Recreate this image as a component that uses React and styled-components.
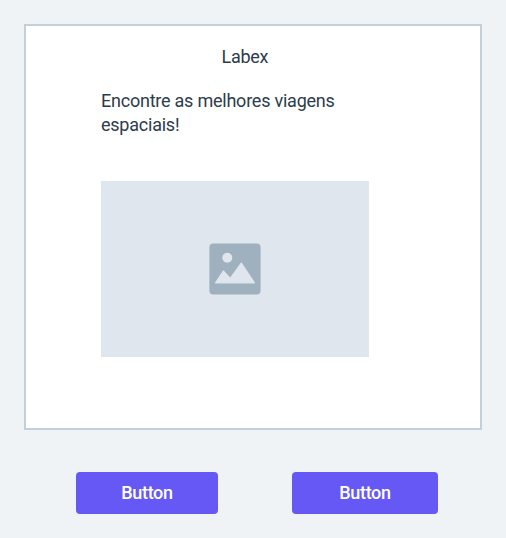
import React from "react";
import styled, { createGlobalStyle } from "styled-components";

const GlobalStyle = createGlobalStyle`
  * { box-sizing: border-box; }
  body { margin: 0; background: #eff3f6; }
`;
const Page = styled.main`
  width: 506px;
  height: 538px;
  padding: 24px 24px 0;
  background: #eff3f6;
  color: #2c3c4b;
  font: 18px/24px "DIN", Roboto, sans-serif;
`;
const Card = styled.section`
  height: 406px;
  padding: 19px 75px 0;
  border: 2px solid #c3cfd9;
  background: #fff;
`;
const Title = styled.h1`
  margin: 0 0 20px 120.5px;
  font: inherit;
  letter-spacing: -0.3px;
`;
const Intro = styled.p`
  width: 260px;
  margin: 0;
  letter-spacing: -0.23px;
`;
const Placeholder = styled.div`
  display: grid;
  place-items: center;
  width: 268px;
  height: 176px;
  margin-top: 44px;
  background: #dfe6ed;
`;
const Actions = styled.div`
  display: flex;
  gap: 74px;
  margin: 42px 0 0 52px;
`;
const Button = styled.button`
  width: ${({ $width }) => $width}px;
  height: 42px;
  padding: 0;
  border: 0;
  border-radius: 4px;
  background: #6558f5;
  color: #fff;
  font: 500 18px/42px "DIN", Roboto, sans-serif;
  letter-spacing: -0.35px;
`;

function ImageIcon() {
  return (
    <svg width="52" height="52" viewBox="0 0 52 52">
      <rect x=".4" y=".4" width="51.2" height="51.2" rx="4" fill="#9fb0be" />
      <circle cx="18.3" cy="14.7" r="5" fill="#dfe6ed" />
      <path
        d="M6.6 39.8 14.3 28 21.3 35.3 32.3 20 45.4 39.8Z"
        fill="#dfe6ed"
        stroke="#dfe6ed"
        strokeWidth="1.2"
        strokeLinejoin="round"
      />
    </svg>
  );
}

export default function App() {
  return (
    <Page>
      <GlobalStyle />
      <Card>
        <Title>Labex</Title>
        <Intro>Encontre as melhores viagens espaciais!</Intro>
        <Placeholder><ImageIcon /></Placeholder>
      </Card>
      <Actions>
        <Button $width={142}>Button</Button>
        <Button $width={146}>Button</Button>
      </Actions>
    </Page>
  );
}
